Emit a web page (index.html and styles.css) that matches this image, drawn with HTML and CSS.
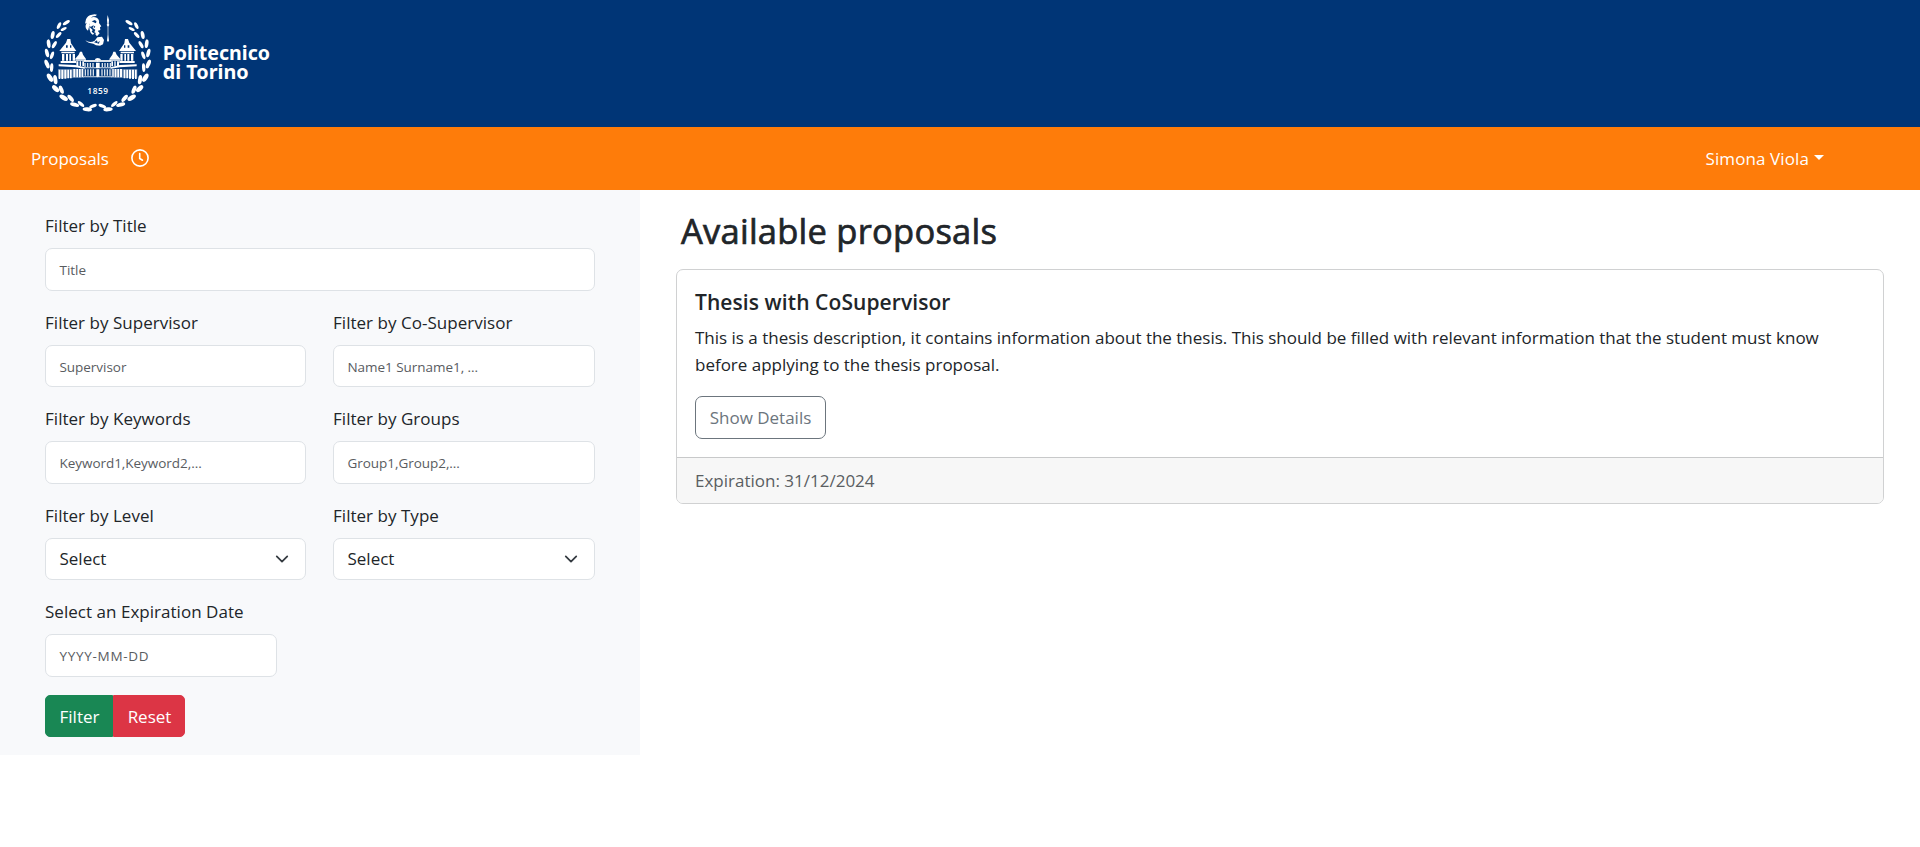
FILE: index.html
```html
<!DOCTYPE html>
<html lang="en">
<head>
<meta charset="utf-8">
<title>Proposals</title>
<link rel="stylesheet" href="styles.css">
</head>
<body>
<header class="brand-bar">
  <svg class="logo" viewBox="0 0 780 381" fill="#fff">
    <defs>
      <g id="branch">
        <ellipse cx="109" cy="68" rx="12" ry="5" transform="rotate(-32 109 68)"/>
        <ellipse cx="87" cy="77" rx="11" ry="5" transform="rotate(-65 87 77)"/>
        <ellipse cx="101" cy="87" rx="10" ry="4" transform="rotate(-28 101 87)"/>
        <ellipse cx="68" cy="105" rx="12" ry="5.5" transform="rotate(-78 68 105)"/>
        <ellipse cx="86" cy="105" rx="11" ry="5" transform="rotate(-48 86 105)"/>
        <ellipse cx="56" cy="131" rx="13" ry="5.5" transform="rotate(-98 56 131)"/>
        <ellipse cx="73" cy="134" rx="12" ry="5" transform="rotate(-60 73 134)"/>
        <ellipse cx="51" cy="159" rx="13" ry="5.5" transform="rotate(75 51 159)"/>
        <ellipse cx="66" cy="166" rx="12" ry="5" transform="rotate(-70 66 166)"/>
        <ellipse cx="51" cy="192" rx="14" ry="6" transform="rotate(68 51 192)"/>
        <ellipse cx="65" cy="203" rx="13" ry="5" transform="rotate(-86 65 203)"/>
        <ellipse cx="60" cy="233" rx="14" ry="7" transform="rotate(58 60 233)"/>
        <ellipse cx="76" cy="239" rx="14" ry="6" transform="rotate(82 76 239)"/>
        <ellipse cx="77" cy="266" rx="13" ry="7" transform="rotate(42 77 266)"/>
        <ellipse cx="94" cy="269" rx="13" ry="6" transform="rotate(68 94 269)"/>
        <ellipse cx="101" cy="293" rx="14" ry="7" transform="rotate(30 101 293)"/>
        <ellipse cx="122" cy="295" rx="13" ry="6" transform="rotate(50 122 295)"/>
        <ellipse cx="134" cy="314" rx="14" ry="6" transform="rotate(15 134 314)"/>
        <ellipse cx="153" cy="312" rx="12" ry="5" transform="rotate(42 153 312)"/>
        <ellipse cx="172" cy="328" rx="14" ry="6" transform="rotate(5 172 328)"/>
        <ellipse cx="189" cy="318" rx="12" ry="5" transform="rotate(-20 189 318)"/>
      </g>
      <g id="wing">
        <path d="M112 117h9l2 13 16 23H88l20-25z"/>
        <path d="M94 155h40v5H94zM96 162h7v20h-7zM108 162h6v20h-6zM118 162h5v20h-5zM128 162h7v20h-7zM92 183h46v6H92z"/>
        <path d="M150 155h6l3 9 9 13h-33l11-13z"/>
        <path d="M136 178h32v4h-32zM139 184h6v14h-6zM149 184h4v15h-4zM157 184h5v15h-5z"/>
        <path d="M86 193l50 2 28 7v4l-28-4-50-3z"/>
        <path d="M86 209h5v28h-5zM94 209h6v28h-6zM103 209h6v27h-6zM112 209h5v26h-5zM120 209h5v26h-5zM130 207h6v25h-6zM139 207h5v25h-5zM147 207h5v25h-5zM155 207h4v24h-4z"/>
        <path d="M84 207h78v27H84z" opacity=".3"/>
        <path d="M162 180h42v6h-42zM163 189h4v12h-4zM171 189h4v12h-4zM179 189h4v12h-4zM187 189h4v12h-4zM162 202h42v3h-42zM164 208h4v19h-4zM172 208h4v19h-4zM180 208h4v19h-4zM188 208h4v19h-4zM160 229h44v3h-44z" opacity=".85"/>
        <path d="M108 136h5v7h-5zM120 136h4v7h-4z" fill="#003576"/>
      </g>
    </defs>
    <use href="#branch"/>
    <use href="#branch" transform="matrix(-1 0 0 1 406 0)"/>
    <use href="#wing"/>
    <use href="#wing" transform="matrix(-1 0 0 1 406 0)"/>
    <path d="M194 181q2-7 9-7t11 7zM198 188h11v16h-11zM199 208h9v22h-9z"/>
    <path d="M168 58q4-12 18-14 8-3 15 0l-4 4q-11 0-15 5 9-4 18 0 9 6 7 16l7 10-4 3 1 8-7 2-5 8-6-3 3-8-8-5 2-8-7 4-6-1q4-5 3-9l-6 22q-9-6-7-16l3-8-5 3z"/>
    <path d="M178 80l10 10-3 5 8 6-5 3q-10-7-10-24zM201 90l8 10-8 9-5-6z"/>
    <path d="M166 121q14 9 28 1l8-10 14-2 6 10-3 13-9 4-12-1-8-5q-15 0-24-10z"/>
    <path d="M192 127l9-6 2 7 6-6-2 9z" fill="#003576"/>
    <path d="M185 64l10-4 5 5-3 5zM190 76l6 4-4 5z" fill="#003576"/>
    <path d="M233 45l4 15-1 12 2 2-3 6v24l2 18-3 4-3-4 2-18V80l-3-6 2-2-1-12z"/>
    <text class="year" x="203" y="281" text-anchor="middle" textLength="62">1859</text>
    <text class="name" x="398" y="179" textLength="322" lengthAdjust="spacingAndGlyphs">Politecnico</text>
    <text class="name" x="398" y="237" textLength="258" lengthAdjust="spacingAndGlyphs">di Torino</text>
  </svg>
</header>
<nav class="navbar">
  <a class="nav-link">Proposals</a>
  <svg class="clock" viewBox="0 0 18 18" fill="none" stroke="currentColor" stroke-width="1.6" stroke-linecap="round"><circle cx="9" cy="9" r="8.1"/><path d="M8.7 4.5v5l2.8 1.7"/></svg>
  <a class="user">Simona Viola<span class="caret"></span></a>
</nav>
<main class="layout">
  <form class="sidebar">
    <div class="field wide"><label>Filter by Title</label><div class="control ph">Title</div></div>
    <div class="field"><label>Filter by Supervisor</label><div class="control ph">Supervisor</div></div>
    <div class="field"><label>Filter by Co-Supervisor</label><div class="control ph">Name1 Surname1, ...</div></div>
    <div class="field"><label>Filter by Keywords</label><div class="control ph">Keyword1,Keyword2,...</div></div>
    <div class="field"><label>Filter by Groups</label><div class="control ph">Group1,Group2,...</div></div>
    <div class="field"><label>Filter by Level</label><div class="control select">Select<svg class="chev" viewBox="0 0 16 16"><path d="m2 5 6 6 6-6"/></svg></div></div>
    <div class="field"><label>Filter by Type</label><div class="control select">Select<svg class="chev" viewBox="0 0 16 16"><path d="m2 5 6 6 6-6"/></svg></div></div>
    <div class="field wide"><label>Select an Expiration Date</label><div class="control ph date">YYYY-MM-DD</div></div>
    <div class="btn-group wide"><button type="button" class="btn green">Filter</button><button type="button" class="btn red">Reset</button></div>
  </form>
  <section class="content">
    <h1>Available proposals</h1>
    <article class="card">
      <div class="card-body">
        <h2>Thesis with CoSupervisor</h2>
        <p>This is a thesis description, it contains information about the thesis. This should be filled with relevant information that the student must know<br>before applying to the thesis proposal.</p>
        <button type="button" class="btn outline">Show Details</button>
      </div>
      <div class="card-footer">Expiration: 31/12/2024</div>
    </article>
  </section>
</main>
</body>
</html>
```
FILE: styles.css
```css
* { box-sizing: border-box; }
body { margin: 0; background: #fff; color: #212529; font: 17px/27px "Open Sans", "Noto Sans", sans-serif; }
.brand-bar { height: 127px; background: #003576; padding-left: 30px; }
.logo { display: block; width: 260px; height: 127px; }
.year { font: 600 25px "Open Sans", sans-serif; }
.name { font: 700 61px "Noto Sans", sans-serif; }
.navbar { height: 63px; background: #fe7c0a; color: #fff; display: flex; align-items: center; padding: 0 96px 0 31px; }
.clock { width: 18px; height: 18px; margin: 0 0 2px 22px; }
.user { margin-left: auto; display: flex; align-items: center; letter-spacing: .1px; }
.caret { border: 5px solid transparent; border-top-color: #fff; border-bottom: 0; margin: 0 0 2px 5px; }
.layout { display: flex; align-items: flex-start; }
.sidebar { width: 640px; height: 565px; background: #f8f9fb; padding: 22px 45px 0; display: grid; grid-template-columns: 261px 262px; column-gap: 27px; row-gap: 18px; align-content: start; }
.wide { grid-column: 1 / -1; }
label { display: block; height: 27px; margin-bottom: 9px; letter-spacing: .03px; }
.control { height: 42.5px; border: 1px solid #dee2e6; border-radius: 7px; background: #fff; padding: 7px 13.5px; display: flex; align-items: center; justify-content: space-between; }
.ph { color: #595c5f; font-size: 13.5px; letter-spacing: -.04px; padding-top: 10px; }
.chev { width: 14px; height: 14px; margin-right: 2.5px; fill: none; stroke: #343a40; stroke-width: 2; stroke-linecap: round; stroke-linejoin: round; }
.date { width: 232px; letter-spacing: .7px; }
.btn-group { display: flex; }
.btn { font: inherit; height: 42.5px; border: 1px solid; padding: 0 13px; border-radius: 7px; }
.green, .red { padding: 1px 12px 0 13px; color: #fff; }
.green { width: 68px; background: #198754; border-color: #198754; border-radius: 5px 0 0 5px; }
.red { width: 72px; background: #dc3545; border-color: #dc3545; border-radius: 0 5px 5px 0; }
.content { flex: 1; padding: 19px 36px 0; }
h1 { margin: 0 0 17px 5px; font-size: 34.5px; line-height: 43px; font-weight: 500; letter-spacing: .24px; -webkit-text-stroke: .7px #212529; }
.card { border: 1px solid #d0d1d2; border-radius: 7px; overflow: hidden; }
.card-body { padding: 19px 18px 18px; }
h2 { margin: 0 0 8px; font-size: 21px; line-height: 27px; font-weight: 600; letter-spacing: .08px; }
p { margin: 0 0 18px; letter-spacing: -.008px; }
.outline { width: 131px; background: #fff; color: #6c757d; border-color: #6c757d; display: block; }
.card-footer { border-top: 1px solid #c8c9ca; background: #f7f7f7; padding: 9px 18px; color: #5a5e62; }
```
